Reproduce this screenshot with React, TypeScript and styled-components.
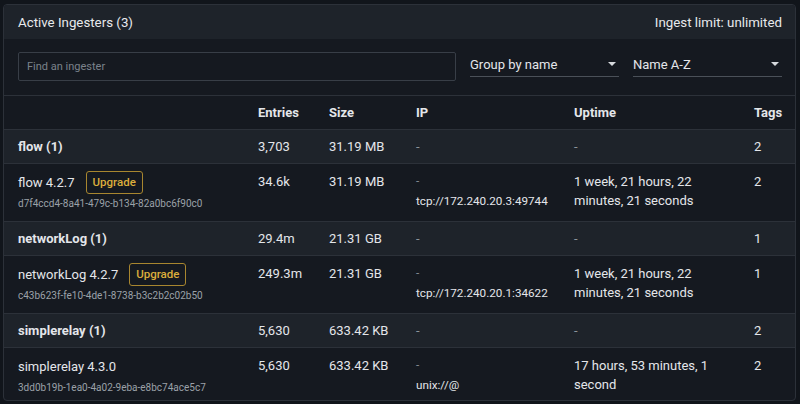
import React from "react";
import styled, { createGlobalStyle } from "styled-components";

const Global = createGlobalStyle`
  html, body { margin: 0; padding: 0; background: #11151b; }
  body {
    font-family: Roboto, "Liberation Sans", sans-serif;
    color: #e4e6ea;
    -webkit-font-smoothing: antialiased;
  }
  * { box-sizing: border-box; }
`;

const Page = styled.div`
  padding: 4px 4px 3px 3px;
  width: 800px;
  height: 404px;
`;

const Card = styled.div`
  border: 1px solid #2c3139;
  border-radius: 4px;
  background: #151920;
  overflow: hidden;
  height: 397px;
`;

const Header = styled.div`
  height: 34px;
  background: #1e232a;
  display: flex;
  align-items: center;
  justify-content: space-between;
  padding: 0 13px 0 14px;
  font-size: 13.3px;
  color: #e8eaed;
`;

const Filters = styled.div`
  display: flex;
  align-items: flex-start;
  gap: 14px;
  padding: 13px 13px 0 14px;
  height: 57px;
  border-bottom: 1px solid #2c3139;
`;

const Search = styled.div`
  flex: 1;
  height: 29px;
  border: 1px solid #383e47;
  border-radius: 2px;
  display: flex;
  align-items: center;
  padding-left: 8px;
  font-size: 11px;
  color: #7b828b;
`;

const Select = styled.div`
  width: 149px;
  height: 25px;
  border-bottom: 1px solid #4a5058;
  display: flex;
  align-items: center;
  justify-content: space-between;
  font-size: 13px;
  color: #e4e6ea;
  padding-right: 3px;
`;

const Caret = styled.span`
  width: 0;
  height: 0;
  border-left: 4px solid transparent;
  border-right: 4px solid transparent;
  border-top: 4px solid #d6d9dd;
`;

const Row = styled.div<{ $kind: "head" | "group" | "item" }>`
  display: grid;
  grid-template-columns: 240px 71px 87px 158px 180px 1fr;
  padding: 0 13px 0 14px;
  font-size: 13px;
  align-items: ${(p) => (p.$kind === "item" ? "start" : "center")};
  height: ${(p) => (p.$kind === "item" ? "58px" : p.$kind === "group" ? "34px" : "33px")};
  background: ${(p) => (p.$kind === "group" ? "#1e232a" : "transparent")};
  font-weight: ${(p) => (p.$kind === "item" ? 400 : 700)};
  padding-top: ${(p) => (p.$kind === "item" ? "8px" : "0")};
  & + & { border-top: 1px solid #2c3139; }
`;

const Cell = styled.div<{ $muted?: boolean; $plain?: boolean }>`
  line-height: 19px;
  padding-right: 14px;
  color: ${(p) => (p.$muted ? "#8d939b" : "#e4e6ea")};
  font-weight: ${(p) => (p.$plain ? 400 : "inherit")};
`;

const IpCell = styled.div`
  font-size: 11.7px;
  line-height: 20px;
  margin-top: -1px;
`;

const NameLine = styled.div`
  display: flex;
  align-items: center;
  gap: 11px;
  height: 22px;
  margin-top: -1px;
`;

const Upgrade = styled.span`
  border: 1px solid #a8862f;
  border-radius: 3px;
  color: #dcae3c;
  font-size: 11.5px;
  font-weight: 500;
  height: 23px;
  display: inline-flex;
  align-items: center;
  padding: 0 6px;
`;

const Id = styled.div`
  font-size: 10px;
  line-height: 14px;
  color: #9ba1a8;
  margin-top: 4px;
`;

const Dash = styled.div`
  color: #8d939b;
`;

const Right = styled.div`
  text-align: right;
`;

type Item = {
  group: string;
  groupEntries: string;
  size: string;
  tags: string;
  name: string;
  upgrade: boolean;
  id: string;
  entries: string;
  ip: string;
  uptime: string;
};

const items: Item[] = [
  {
    group: "flow (1)",
    groupEntries: "3,703",
    size: "31.19 MB",
    tags: "2",
    name: "flow 4.2.7",
    upgrade: true,
    id: "d7f4ccd4-8a41-479c-b134-82a0bc6f90c0",
    entries: "34.6k",
    ip: "tcp://172.240.20.3:49744",
    uptime: "1 week, 21 hours, 22 minutes, 21 seconds",
  },
  {
    group: "networkLog (1)",
    groupEntries: "29.4m",
    size: "21.31 GB",
    tags: "1",
    name: "networkLog 4.2.7",
    upgrade: true,
    id: "c43b623f-fe10-4de1-8738-b3c2b2c02b50",
    entries: "249.3m",
    ip: "tcp://172.240.20.1:34622",
    uptime: "1 week, 21 hours, 22 minutes, 21 seconds",
  },
  {
    group: "simplerelay (1)",
    groupEntries: "5,630",
    size: "633.42 KB",
    tags: "2",
    name: "simplerelay 4.3.0",
    upgrade: false,
    id: "3dd0b19b-1ea0-4a02-9eba-e8bc74ace5c7",
    entries: "5,630",
    ip: "unix://@",
    uptime: "17 hours, 53 minutes, 1 second",
  },
];

export default function App() {
  return (
    <Page>
      <Global />
      <Card>
        <Header>
          <span>Active Ingesters (3)</span>
          <span>Ingest limit: unlimited</span>
        </Header>
        <Filters>
          <Search>Find an ingester</Search>
          <Select>
            <span>Group by name</span>
            <Caret />
          </Select>
          <Select>
            <span>Name A-Z</span>
            <Caret />
          </Select>
        </Filters>
        <Row $kind="head">
          <Cell />
          <Cell>Entries</Cell>
          <Cell>Size</Cell>
          <Cell>IP</Cell>
          <Cell>Uptime</Cell>
          <Right>Tags</Right>
        </Row>
        {items.map((it) => (
          <React.Fragment key={it.id}>
            <Row $kind="group">
              <Cell>{it.group}</Cell>
              <Cell $plain>{it.groupEntries}</Cell>
              <Cell $plain>{it.size}</Cell>
              <Cell $muted $plain>-</Cell>
              <Cell $muted $plain>-</Cell>
              <Cell $plain>{it.tags}</Cell>
            </Row>
            <Row $kind="item">
              <div>
                <NameLine>
                  <span>{it.name}</span>
                  {it.upgrade && <Upgrade>Upgrade</Upgrade>}
                </NameLine>
                <Id>{it.id}</Id>
              </div>
              <Cell>{it.entries}</Cell>
              <Cell>{it.size}</Cell>
              <IpCell>
                <Dash>-</Dash>
                <div>{it.ip}</div>
              </IpCell>
              <Cell>{it.uptime}</Cell>
              <Cell>{it.tags}</Cell>
            </Row>
          </React.Fragment>
        ))}
      </Card>
    </Page>
  );
}
